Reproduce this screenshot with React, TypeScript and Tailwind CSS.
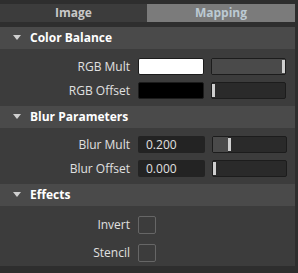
import React from "react";

const font = { fontFamily: '"Open Sans", "Noto Sans", sans-serif' };

function Header({ title }: { title: string }) {
  return (
    <div className="flex h-[22px] items-center bg-[#4a4a4a] pl-[13px]">
      <svg width="8" height="6" viewBox="0 0 8 6" className="mr-[9px]">
        <polygon points="0,0 8,0 4,5" fill="#d0d0d0" />
      </svg>
      <span className="text-[12px] font-bold text-white">{title}</span>
    </div>
  );
}

function Label({ children }: { children: React.ReactNode }) {
  return (
    <div className="w-[138px] pr-[8px] text-right text-[12px] text-[#e0e0e0]">{children}</div>
  );
}

function Slider({ pct }: { pct: number }) {
  return (
    <div className="relative ml-[7px] h-[17px] w-[75px] rounded-[2px] border border-[#1c1c1c] bg-[#2a2a2a]">
      <div className="absolute left-0 top-0 h-full bg-[#4a4a4a]" style={{ width: `${pct}%` }} />
      <div
        className="absolute top-[1px] h-[13px] w-[3px] bg-[#cfcfcf]"
        style={{ left: `calc(${pct}% - ${pct > 50 ? 3 : 0}px)` }}
      />
    </div>
  );
}

export default function App() {
  return (
    <div className="h-[273px] w-[298px] bg-[#2e2e2e]" style={font}>
      <div className="w-[295px]">
        <div className="h-[4px]" />
        <div className="flex h-[18px]">
          <div className="flex w-[147px] items-center justify-center bg-[#3c3c3c] text-[12px] font-bold text-[#c8c8c8]">
            Image
          </div>
          <div className="flex flex-1 items-center justify-center bg-[#7b7b7b] text-[12px] font-bold text-[#bccad3]">
            Mapping
          </div>
        </div>
        <div className="h-[5px]" />

        <Header title="Color Balance" />
        <div className="flex flex-col gap-[7px] bg-[#3c3c3c] pb-[7px] pt-[9px]">
          <div className="flex h-[17px] items-center">
            <Label>RGB Mult</Label>
            <div className="h-[17px] w-[66px] rounded-[2px] border border-[#1c1c1c] bg-white" />
            <Slider pct={100} />
          </div>
          <div className="flex h-[17px] items-center">
            <Label>RGB Offset</Label>
            <div className="h-[17px] w-[66px] rounded-[2px] border border-[#1c1c1c] bg-black" />
            <Slider pct={0} />
          </div>
        </div>

        <Header title="Blur Parameters" />
        <div className="flex flex-col gap-[7px] bg-[#3c3c3c] pb-[7px] pt-[8px]">
          <div className="flex h-[17px] items-center">
            <Label>Blur Mult</Label>
            <div className="flex h-[17px] w-[67px] items-center rounded-[2px] bg-[#232323] pl-[8px] text-[12px] text-[#e0e0e0]">
              0.200
            </div>
            <Slider pct={20} />
          </div>
          <div className="flex h-[17px] items-center">
            <Label>Blur Offset</Label>
            <div className="flex h-[17px] w-[67px] items-center rounded-[2px] bg-[#232323] pl-[8px] text-[12px] text-[#e0e0e0]">
              0.000
            </div>
            <Slider pct={0} />
          </div>
        </div>

        <Header title="Effects" />
        <div className="flex flex-col gap-[10px] bg-[#3c3c3c] pb-[4px] pt-[10px]">
          <div className="flex h-[18px] items-center">
            <Label>Invert</Label>
            <div className="h-[18px] w-[18px] rounded-[2px] border border-[#666666] bg-[#3c3c3c]" />
          </div>
          <div className="flex h-[18px] items-center">
            <Label>Stencil</Label>
            <div className="h-[18px] w-[18px] rounded-[2px] border border-[#666666] bg-[#3c3c3c]" />
          </div>
        </div>
      </div>
    </div>
  );
}
